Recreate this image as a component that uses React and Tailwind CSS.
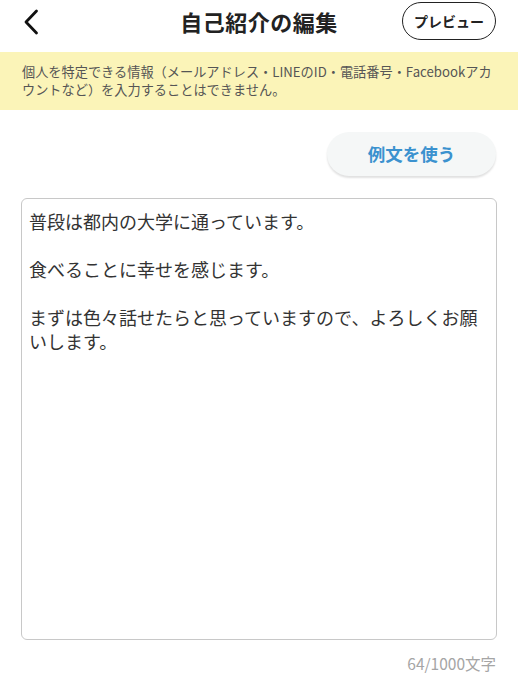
import React, { useState } from 'react';

const jp = { fontFamily: '"Noto Sans CJK JP", "Noto Sans", sans-serif' };

const initialText =
  '普段は都内の大学に通っています。\n\n食べることに幸せを感じます。\n\nまずは色々話せたらと思っていますので、よろしくお願いします。';

export default function App() {
  const [text, setText] = useState(initialText);

  return (
    <div className="w-[518px] h-[700px] bg-white text-[#222]" style={jp}>
      {/* Header */}
      <div className="h-[52px] relative flex items-center justify-center">
        <button className="absolute left-[18px] top-[8px] w-[26px] h-[28px] flex items-center justify-center">
          <svg width="16" height="26" viewBox="0 0 16 26" fill="none">
            <path d="M13.5 2 L3 13 L13.5 24" stroke="#111" strokeWidth="2.8" strokeLinecap="round" strokeLinejoin="round" />
          </svg>
        </button>
        <h1 className="text-[22px] font-bold leading-none -mt-[10px] tracking-[0.5px]">自己紹介の編集</h1>
        <button className="absolute right-[22px] top-[2px] w-[94px] h-[38px] rounded-full border-[1.5px] border-[#222] text-[14px] font-bold flex items-center justify-center">
          プレビュー
        </button>
      </div>

      {/* Notice */}
      <div className="h-[58px] bg-[#fbf4b8] px-[22px] flex items-center">
        <p className="text-[13.2px] leading-[18px] text-[#555]">
          個人を特定できる情報（メールアドレス・LINEのID・電話番号・Facebookアカウントなど）を入力することはできません。
        </p>
      </div>

      {/* Example button */}
      <div className="flex justify-end px-[22px] mt-[22px]">
        <button
          onClick={() => setText(initialText)}
          className="w-[169px] h-[44px] rounded-full bg-[#f5f7f7] shadow-[0_2px_2px_rgba(0,0,0,0.12)] text-[17.5px] font-bold text-[#3b92cf]"
        >
          例文を使う
        </button>
      </div>

      {/* Textarea */}
      <div className="px-[21px] mt-[22px]">
        <textarea
          value={text}
          onChange={(e) => setText(e.target.value)}
          className="block w-full h-[442px] resize-none rounded-[6px] border border-[#c8c8c8] px-[7px] pt-[10px] text-[18px] leading-[24px] text-[#333] outline-none"
          style={jp}
        />
        <div className="mt-[12px] text-right text-[15.5px] leading-[22px] text-[#a5a5a5] pr-[1px]">
          {text.length}/1000文字
        </div>
      </div>
    </div>
  );
}
